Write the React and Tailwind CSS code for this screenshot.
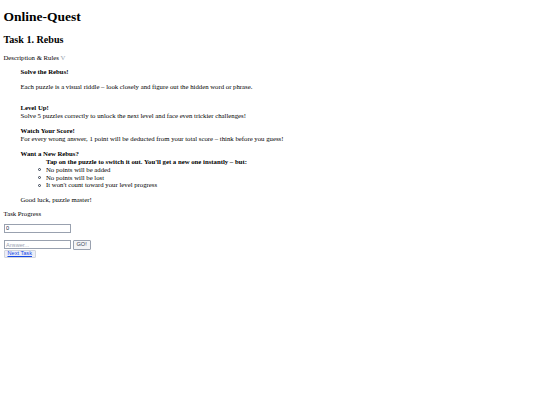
function Circle() {
  return <span className="absolute left-[-8px] top-[2.6px] w-[3px] h-[3px] rounded-full border-[0.75px] border-gray-700" />;
}

export default function App() {
  return (
    <div className="px-[3.5px] pb-[3.5px] font-['Liberation_Serif',serif] text-[6.75px] leading-[1.18] text-black bg-white min-h-[405px]">
      <h1 className="text-[13.5px] font-bold leading-[1.15] pt-[9px] mb-[9px]">Online-Quest</h1>
      <h2 className="text-[10.1px] font-bold leading-[1.15] my-[8.4px]">Task 1. Rebus</h2>

      <div>
        Description &amp; Rules <span className="text-gray-400">V</span>
      </div>

      <div className="ml-[17px]">
        <p className="font-bold my-[7px]">Solve the Rebus!</p>
        <p className="mt-[7px] mb-[13px]">Each puzzle is a visual riddle – look closely and figure out the hidden word or phrase.</p>
        <p className="my-[7px]">
          <b>Level Up!</b>
          <br />
          Solve 5 puzzles correctly to unlock the next level and face even trickier challenges!
        </p>
        <p className="my-[7px]">
          <b>Watch Your Score!</b>
          <br />
          For every wrong answer, 1 point will be deducted from your total score – think before you guess!
        </p>
        <div className="my-[7px]">
          <b>Want a New Rebus?</b>
          <div className="pl-[25.5px] leading-[1.14]">
            <b>Tap on the puzzle to switch it out. You'll get a new one instantly – but:</b>
            <ul>
              <li className="relative"><Circle />No points will be added</li>
              <li className="relative"><Circle />No points will be lost</li>
              <li className="relative"><Circle />It won't count toward your level progress</li>
            </ul>
          </div>
        </div>
        <p className="mt-[7px] mb-[6px]">Good luck, puzzle master!</p>
      </div>

      <p className="my-[6px]">Task Progress</p>
      <input
        readOnly
        value="0"
        className="block w-[67px] h-[9px] border border-gray-400 px-[1.5px] font-['Liberation_Sans',sans-serif] text-[5.6px] leading-none text-gray-800"
      />
      <div className="mt-[7px] flex items-center gap-[2px]">
        <input
          placeholder="Answer..."
          className="w-[67px] h-[9px] border border-gray-400 px-[1.5px] font-['Liberation_Sans',sans-serif] text-[5.6px] leading-none placeholder:text-gray-400"
        />
        <button className="h-[10px] px-[3px] border border-gray-400 rounded-[1px] bg-gray-100 text-gray-700 font-['Liberation_Sans',sans-serif] text-[5.6px] leading-none">
          GO!
        </button>
      </div>
      <button className="block h-[8px] px-[3px] border border-gray-300 rounded-[1px] bg-[#eceef8] font-['Liberation_Sans',sans-serif] text-[5.6px] leading-none">
        <span className="text-blue-700 underline">Next Task</span>
      </button>
    </div>
  );
}
